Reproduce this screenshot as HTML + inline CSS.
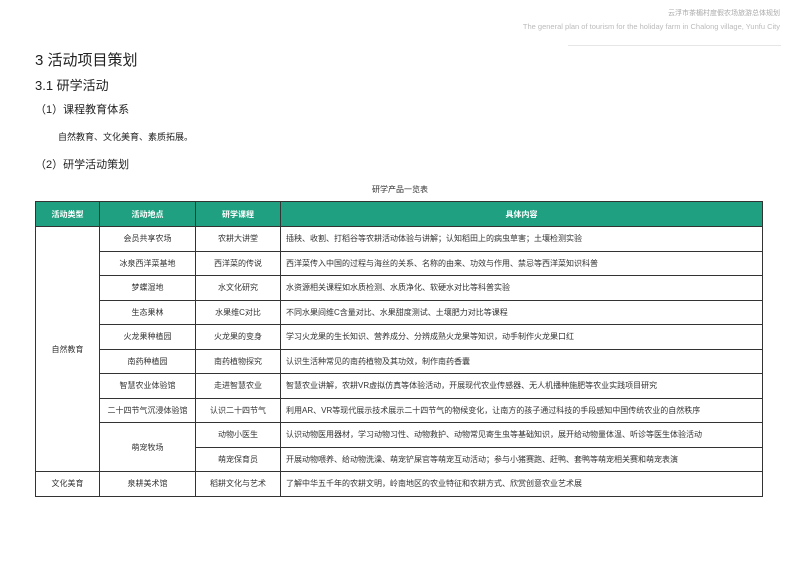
<!DOCTYPE html>
<html><head><meta charset="utf-8"><style>
body{margin:0;width:793px;height:561px;background:#fff;font-family:"Liberation Sans","Noto Sans CJK SC",sans-serif;color:#222;position:relative;overflow:hidden}
.a{position:absolute;white-space:nowrap}
table{position:absolute;left:35px;top:201px;width:728px;border-collapse:collapse;font-size:8px;color:#333}
td,th{border:1px solid #333;height:23.5px;padding:0;text-align:center}
th{background:#1fa080;color:#fff;font-weight:bold;height:24px}
td.l{text-align:left;padding-left:5px}
</style></head><body>
<div class="a" style="right:13px;top:8px;font-size:7px;color:#aaa">云浮市茶楣村度假农场旅游总体规划</div>
<div class="a" style="right:13px;top:22px;font-size:7.5px;color:#bbb">The general plan of tourism for the holiday farm in Chalong village, Yunfu City</div>
<div class="a" style="left:568px;top:45px;width:213px;height:1px;background:#e6e6e6"></div>
<div class="a" style="left:35px;top:49px;font-size:15px">3 活动项目策划</div>
<div class="a" style="left:35px;top:75px;font-size:13px">3.1 研学活动</div>
<div class="a" style="left:35px;top:101px;font-size:11px">（1）课程教育体系</div>
<div class="a" style="left:58px;top:130px;font-size:9px">自然教育、文化美育、素质拓展。</div>
<div class="a" style="left:35px;top:156px;font-size:11px">（2）研学活动策划</div>
<div class="a" style="left:0;width:800px;text-align:center;top:184px;font-size:8px;color:#333">研学产品一览表</div>
<table>
<colgroup><col style="width:64px"><col style="width:96px"><col style="width:85px"><col></colgroup>
<tr><th>活动类型</th><th>活动地点</th><th>研学课程</th><th>具体内容</th></tr>
<tr><td rowspan="10">自然教育</td><td>会员共享农场</td><td>农耕大讲堂</td><td class="l">插秧、收割、打稻谷等农耕活动体验与讲解；认知稻田上的病虫草害；土壤检测实验</td></tr>
<tr><td>冰泉西洋菜基地</td><td>西洋菜的传说</td><td class="l">西洋菜传入中国的过程与海丝的关系、名称的由来、功效与作用、禁忌等西洋菜知识科普</td></tr>
<tr><td>梦蝶湿地</td><td>水文化研究</td><td class="l">水资源相关课程如水质检测、水质净化、软硬水对比等科普实验</td></tr>
<tr><td>生态果林</td><td>水果维C对比</td><td class="l">不同水果间维C含量对比、水果甜度测试、土壤肥力对比等课程</td></tr>
<tr><td>火龙果种植园</td><td>火龙果的变身</td><td class="l">学习火龙果的生长知识、营养成分、分辨成熟火龙果等知识，动手制作火龙果口红</td></tr>
<tr><td>南药种植园</td><td>南药植物探究</td><td class="l">认识生活种常见的南药植物及其功效，制作南药香囊</td></tr>
<tr><td>智慧农业体验馆</td><td>走进智慧农业</td><td class="l">智慧农业讲解，农耕VR虚拟仿真等体验活动，开展现代农业传感器、无人机播种施肥等农业实践项目研究</td></tr>
<tr><td>二十四节气沉浸体验馆</td><td>认识二十四节气</td><td class="l">利用AR、VR等现代展示技术展示二十四节气的物候变化，让南方的孩子通过科技的手段感知中国传统农业的自然秩序</td></tr>
<tr><td rowspan="2">萌宠牧场</td><td>动物小医生</td><td class="l">认识动物医用器材，学习动物习性、动物救护、动物常见寄生虫等基础知识，展开给动物量体温、听诊等医生体验活动</td></tr>
<tr><td>萌宠保育员</td><td class="l">开展动物喂养、给动物洗澡、萌宠铲屎官等萌宠互动活动；参与小猪赛跑、赶鸭、套鸭等萌宠相关赛和萌宠表演</td></tr>
<tr><td>文化美育</td><td>泉耕美术馆</td><td>稻耕文化与艺术</td><td class="l">了解中华五千年的农耕文明，岭南地区的农业特征和农耕方式、欣赏创意农业艺术展</td></tr>
</table>
</body></html>
